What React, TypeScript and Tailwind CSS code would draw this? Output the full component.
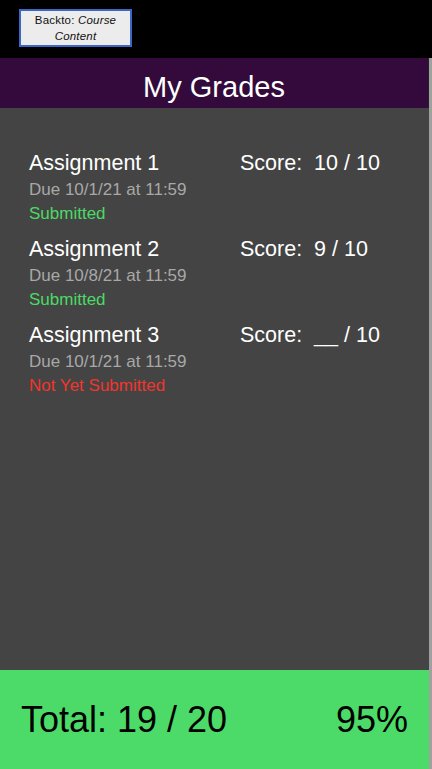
const assignments = [
  { name: "Assignment 1", score: "10 / 10", due: "Due 10/1/21 at 11:59", done: true },
  { name: "Assignment 2", score: "9 / 10", due: "Due 10/8/21 at 11:59", done: true },
  { name: "Assignment 3", score: "__ / 10", due: "Due 10/1/21 at 11:59", done: false },
];

const App = () => {
  return (
    <div className="w-[432px] h-[769px] bg-black flex flex-col font-['Liberation_Sans',Arial,sans-serif] overflow-hidden">
      {/* top bar */}
      <div className="h-[58px] shrink-0 pl-[19px] pt-[9px]">
        <button className="w-[113px] h-[38px] bg-[#ececec] border-2 border-[#3b67c9] text-[11.5px] leading-[16px] tracking-[0.2px] text-[#111] text-center">
          Backto: <i>Course</i>
          <br />
          <i>Content</i>
        </button>
      </div>

      <div className="flex-1 flex flex-col border-r-[3px] border-[#a0a0a0]">
        <div className="h-[50px] shrink-0 bg-[#330a3b] flex items-center justify-center pt-[10px] text-white text-[29px] border-r border-[#222]">
          My Grades
        </div>

        <div className="flex-1 bg-[#444444] pt-[44px] px-[29px] flex flex-col gap-[14px]">
          {assignments.map((a) => (
            <div key={a.name} className="flex flex-col">
              <div className="flex text-white text-[21.5px] leading-[22px]">
                <span className="w-[211px]">{a.name}</span>
                <span className="whitespace-pre">Score:  {a.score}</span>
              </div>
              <div className="text-[#a8a8a8] text-[17px] leading-[20px] mt-[6px]">{a.due}</div>
              <div
                className={
                  a.done
                    ? "text-[#4cd964] text-[17px] leading-[20px] mt-[4px]"
                    : "text-[#f0362c] text-[17px] leading-[20px] mt-[4px]"
                }
              >
                {a.done ? "Submitted" : "Not Yet Submitted"}
              </div>
            </div>
          ))}
        </div>

        <div className="h-[99px] shrink-0 bg-[#4cdb68] flex items-center justify-between px-[21px] text-black text-[36px]">
          <span>Total: 19 / 20</span>
          <span>95%</span>
        </div>
      </div>
    </div>
  );
};

export default App;
